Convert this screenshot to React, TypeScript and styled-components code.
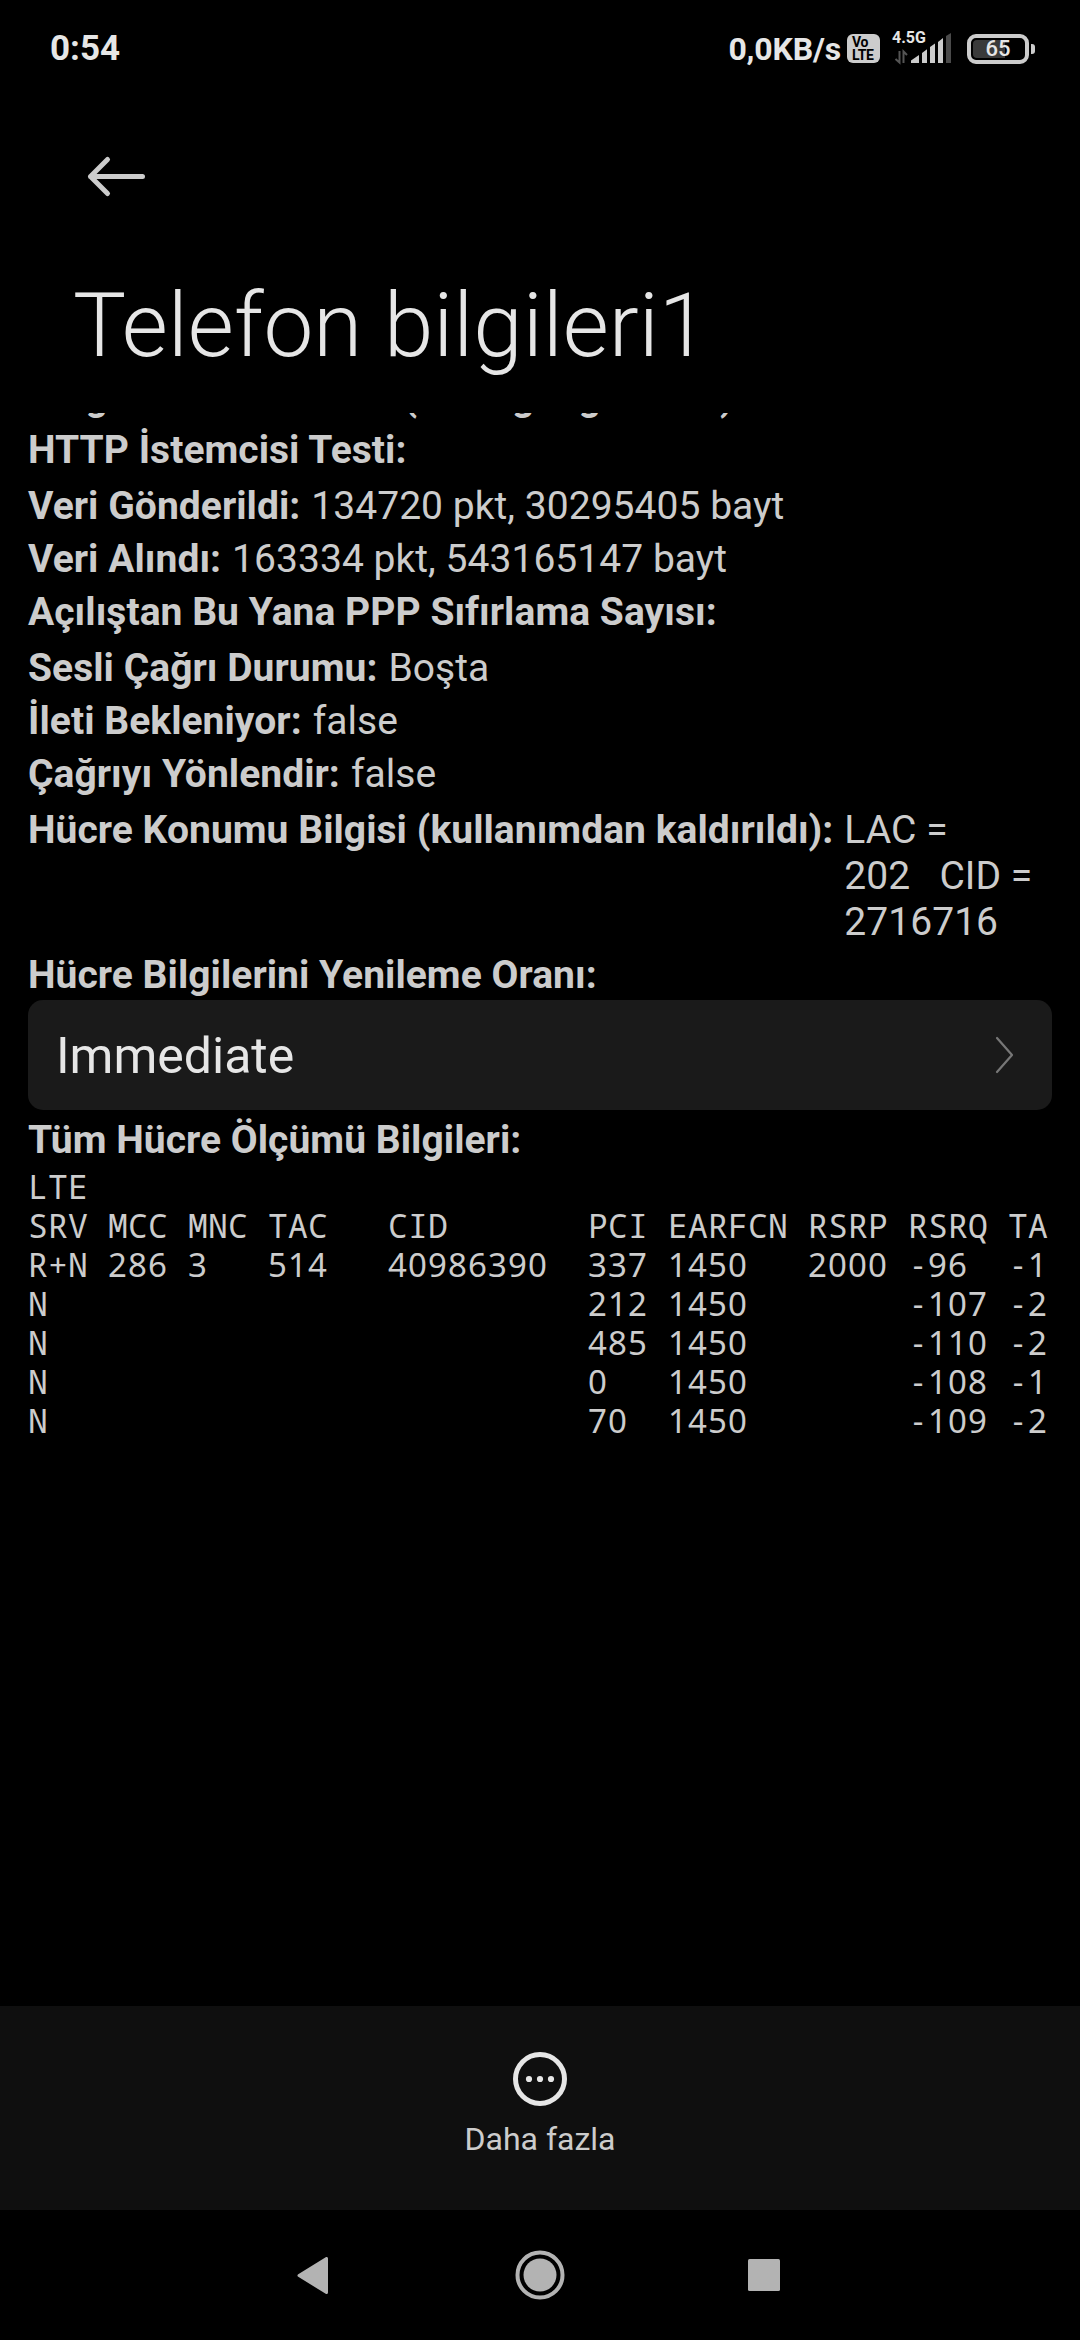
import React from "react";
import styled, { createGlobalStyle } from "styled-components";

const GlobalStyle = createGlobalStyle`
  * { box-sizing: border-box; }
  html, body { margin: 0; padding: 0; background: #000; }
`;

const Screen = styled.div`
  width: 1080px;
  height: 2340px;
  display: flex;
  flex-direction: column;
  background: #000;
  color: #ccc;
  font-family: Roboto, "Noto Sans", sans-serif;
  overflow: hidden;
`;

const StatusBar = styled.header`
  height: 97px;
  padding: 0 45px 0 50px;
  display: flex;
  justify-content: space-between;
  align-items: center;
  color: #e6e6e6;
`;

const Clock = styled.span`
  font-size: 35px;
  line-height: 40px;
  padding-top: 1px;
  font-weight: 700;
`;

const StatusIcons = styled.div`
  display: flex;
  align-items: center;
`;

const NetSpeed = styled.span`
  font-size: 32px;
  line-height: 42px;
  font-weight: 700;
  letter-spacing: -0.15px;
  margin-right: 6px;
`;

const VoLte = styled.div`
  width: 33px;
  height: 29px;
  border-radius: 6px;
  background: #ccc;
  color: #000;
  display: flex;
  flex-direction: column;
  padding: 2px 0 0 5px;
  font-size: 14px;
  line-height: 12.5px;
  font-weight: 700;
  letter-spacing: -0.3px;
`;

const Signal = styled.div`
  position: relative;
  width: 60px;
  height: 32px;
  margin: 0 15px 0 12px;
  display: flex;
`;

const NetType = styled.span`
  position: absolute;
  left: 0;
  top: -4px;
  font-size: 16px;
  line-height: 18px;
  font-weight: 700;
`;

const Battery = styled.div`
  width: 62px;
  height: 30px;
  border: 4.5px solid #ccc;
  border-radius: 9px;
  padding: 2px;
  display: flex;
`;

const BatteryLevel = styled.div`
  flex: 1;
  border-radius: 4px;
  display: flex;
  align-items: center;
  justify-content: center;
  background: linear-gradient(to right, #3a3a3a 65%, #000 65%);
  font-size: 22px;
  line-height: 20px;
  font-weight: 500;
`;

const BatteryTip = styled.div`
  width: 4px;
  height: 10px;
  margin-left: 2px;
  border-radius: 0 3px 3px 0;
  background: #ccc;
`;

const Header = styled.div`
  height: 316px;
  padding: 57px 0 0 73px;
  display: flex;
  flex-direction: column;
  align-items: flex-start;
`;

const BackButton = styled.button`
  border: 0;
  padding: 0 0 0 13px;
  background: none;
  height: 46px;
  display: flex;
`;

const Title = styled.h1`
  margin: 74px 0 0;
  font-size: 89px;
  line-height: 104px;
  font-weight: 300;
  color: #e6e6e6;
  white-space: nowrap;
`;

const Scroller = styled.main`
  flex: 1;
  overflow: hidden;
`;

const List = styled.div`
  margin-top: -39px;
  padding: 0 28px;
  display: flex;
  flex-direction: column;
`;

const Row = styled.div<{ $gap?: number }>`
  display: flex;
  align-items: flex-start;
  font-size: 39px;
  line-height: 46px;
  letter-spacing: 0.04px;
  padding-bottom: ${(p) => p.$gap ?? 7}px;
`;

const Label = styled.span`
  font-weight: 700;
  white-space: nowrap;
  margin-right: 11px;
`;

const Value = styled.span`
  white-space: pre;
`;

const Select = styled.div`
  height: 110px;
  padding: 0 38px 0 28px;
  border-radius: 15px;
  background: #1a1a1a;
  color: #e6e6e6;
  display: flex;
  align-items: center;
  justify-content: space-between;
  margin-bottom: 7px;
`;

const SelectValue = styled.span`
  padding-top: 2px;
  font-size: 50px;
  line-height: 58px;
`;

const Cells = styled.div`
  display: grid;
  grid-template-columns: 80px 80px 80px 120px 200px 80px 140px 100px 100px 44px;
  grid-auto-rows: 39px;
  line-height: 37px;
  white-space: pre;
`;

const Mono = styled.span`
  font-family: "Noto Sans Mono", "DejaVu Sans Mono", monospace;
  font-size: 33px;
  letter-spacing: 0.2px;
`;

const Digits = styled.span`
  font-family: "Noto Sans", "Open Sans", sans-serif;
  font-size: 33px;
  letter-spacing: 1.12px;
`;

const Minus = styled.span`
  display: inline-block;
  width: 20px;
  text-align: center;
  letter-spacing: 0;
`;

const ActionBar = styled.footer`
  height: 204px;
  padding-top: 46px;
  background: #0f0f0f;
  display: flex;
  flex-direction: column;
  align-items: center;
`;

const ActionLabel = styled.span`
  margin-top: 14px;
  font-size: 32px;
  line-height: 38px;
`;

const NavBar = styled.nav`
  height: 130px;
  padding: 0 300px 0 297px;
  display: flex;
  align-items: center;
  justify-content: space-between;
`;

const HomeIcon = styled.svg`
  margin-left: 3px;
`;

const rows: [string, string, number][] = [
  ["Ping Ana Makine Adı (www.google.com) IPv4:", "", 7],
  ["HTTP İstemcisi Testi:", "", 10],
  ["Veri Gönderildi:", "134720 pkt, 30295405 bayt", 7],
  ["Veri Alındı:", "163334 pkt, 543165147 bayt", 7],
  ["Açılıştan Bu Yana PPP Sıfırlama Sayısı:", "", 10],
  ["Sesli Çağrı Durumu:", "Boşta", 7],
  ["İleti Bekleniyor:", "false", 7],
  ["Çağrıyı Yönlendir:", "false", 10],
  ["Hücre Konumu Bilgisi (kullanımdan kaldırıldı):", "LAC =\n202   CID =\n2716716", 7],
  ["Hücre Bilgilerini Yenileme Oranı:", "", 2],
];

const cells: string[][] = [
  ["LTE", "", "", "", "", "", "", "", "", ""],
  ["SRV", "MCC", "MNC", "TAC", "CID", "PCI", "EARFCN", "RSRP", "RSRQ", "TA"],
  ["R+N", "286", "3", "514", "40986390", "337", "1450", "2000", "-96", "-1"],
  ["N", "", "", "", "", "212", "1450", "", "-107", "-2"],
  ["N", "", "", "", "", "485", "1450", "", "-110", "-2"],
  ["N", "", "", "", "", "0", "1450", "", "-108", "-1"],
  ["N", "", "", "", "", "70", "1450", "", "-109", "-2"],
];

function Cell({ text }: { text: string }) {
  if (!/\d/.test(text)) return <Mono>{text}</Mono>;
  return (
    <Digits>
      {text.startsWith("-") && <Minus>-</Minus>}
      {text.replace("-", "")}
    </Digits>
  );
}

export default function App() {
  return (
    <Screen>
      <GlobalStyle />
      <StatusBar>
        <Clock>0:54</Clock>
        <StatusIcons>
          <NetSpeed>0,0KB/s</NetSpeed>
          <VoLte>
            <span>Vo</span>
            <span>LTE</span>
          </VoLte>
          <Signal>
            <NetType>4.5G</NetType>
            <svg width="60" height="32" viewBox="0 0 60 32">
              <path d="M19 30V27.5L27 22V30Z M30 30V20L35 16.3V30Z M38 30V14L43 10.5V30Z M46 30V9L51 5V30Z" fill="#ccc" />
              <path d="M54 30V3L59 0V30Z" fill="#4a4a4a" />
              <path d="M7.5 18V29.5L3.500 26M11.500 30V18.5L15 22" stroke="#555" strokeWidth="2" fill="none" />
            </svg>
          </Signal>
          <Battery>
            <BatteryLevel>65</BatteryLevel>
          </Battery>
          <BatteryTip />
        </StatusIcons>
      </StatusBar>
      <Header>
        <BackButton aria-label="Geri">
          <svg width="62" height="46" viewBox="0 0 62 46" fill="none" stroke="#ccc" strokeWidth="5" strokeLinecap="round" strokeLinejoin="round">
            <path d="M21.500 5.500L4.500 22.500L21.500 39.500M4.500 22.500H56.500" />
          </svg>
        </BackButton>
        <Title>Telefon bilgileri1</Title>
      </Header>
      <Scroller>
        <List>
          {rows.map(([label, value, gap]) => (
            <Row key={label} $gap={gap}>
              <Label>{label}</Label>
              {value && <Value>{value}</Value>}
            </Row>
          ))}
          <Select>
            <SelectValue>Immediate</SelectValue>
            <svg width="20" height="38" viewBox="0 0 20 38" fill="none" stroke="#777" strokeWidth="2.200" strokeLinecap="round" strokeLinejoin="round">
              <path d="M3 2L18 19L3 36" />
            </svg>
          </Select>
          <Row $gap={5}>
            <Label>Tüm Hücre Ölçümü Bilgileri:</Label>
          </Row>
          <Cells>
            {cells.flatMap((line, r) => line.map((text, c) => <Cell key={`${r}-${c}`} text={text} />))}
          </Cells>
        </List>
      </Scroller>
      <ActionBar>
        <svg width="54" height="54" viewBox="0 0 54 54">
          <circle cx="27" cy="27" r="24.500" fill="none" stroke="#e6e6e6" strokeWidth="5" />
          <g fill="#e6e6e6">
            <circle cx="16" cy="27" r="3.100" />
            <circle cx="27" cy="27" r="3.100" />
            <circle cx="38" cy="27" r="3.100" />
          </g>
        </svg>
        <ActionLabel>Daha fazla</ActionLabel>
      </ActionBar>
      <NavBar>
        <svg width="31" height="37" viewBox="0 0 31 37">
          <path d="M2 18.500L29.500 1.500V35.500Z" fill="#b3b3b3" stroke="#b3b3b3" strokeWidth="3" strokeLinejoin="round" />
        </svg>
        <HomeIcon width="50" height="50" viewBox="0 0 50 50">
          <circle cx="25" cy="25" r="22.500" fill="none" stroke="#b3b3b3" strokeWidth="4" />
          <circle cx="25" cy="25" r="16.500" fill="#b3b3b3" />
        </HomeIcon>
        <svg width="32" height="32" viewBox="0 0 32 32">
          <rect width="32" height="32" rx="1.500" fill="#b3b3b3" />
        </svg>
      </NavBar>
    </Screen>
  );
}
